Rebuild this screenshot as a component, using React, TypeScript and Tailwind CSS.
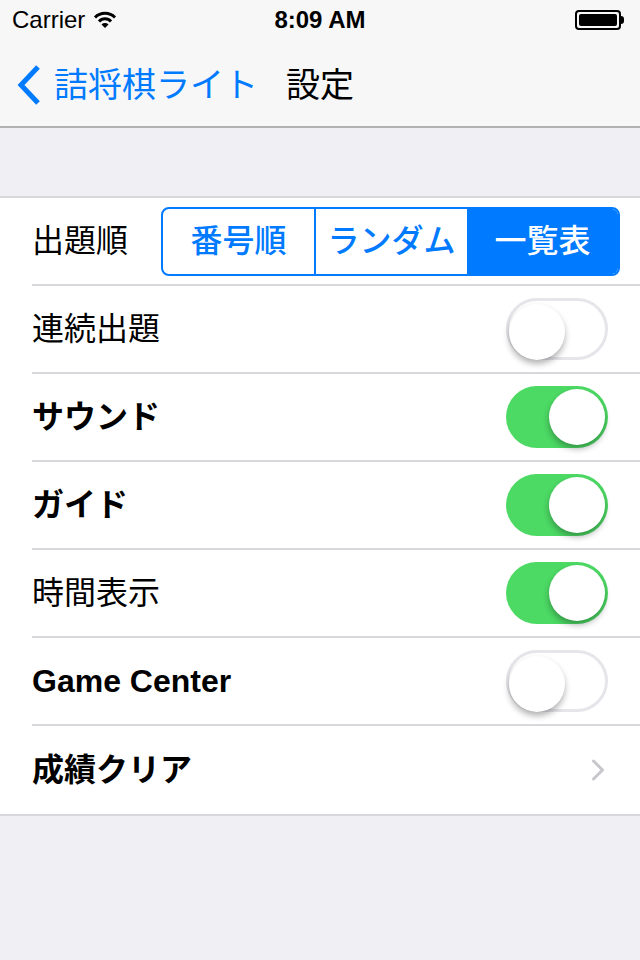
import { ChevronRight } from "lucide-react";

const jp = { fontFamily: '"Liberation Sans", "Noto Sans CJK JP", sans-serif' };

function Toggle({ on }: { on: boolean }) {
  return (
    <div
      className={`relative w-[102px] h-[62px] rounded-full ${
        on ? "bg-[#4cd964]" : "bg-white border-[3px] border-[#e5e5ea]"
      }`}
    >
      <div
        className={`absolute top-[3px] w-[56px] h-[56px] rounded-full bg-white shadow-[0_4px_6px_rgba(0,0,0,0.3)] ${
          on ? "right-[3px]" : "left-0 -top-[0px]"
        }`}
      />
    </div>
  );
}

function Row({ label, bold, children, last, pr = "pr-8" }: { label: string; bold?: boolean; children: React.ReactNode; last?: boolean; pr?: string }) {
  return (
    <div className="pl-8">
      <div className={`h-[88px] flex items-center justify-between ${pr} ${last ? "" : "border-b-2 border-[#d8d8dc]"}`}>
        <span className={`text-[32px] text-black ${bold ? "font-semibold" : ""}`} style={jp}>
          {label}
        </span>
        {children}
      </div>
    </div>
  );
}

export default function App() {
  return (
    <div className="w-[640px] h-[960px] bg-[#efeff4]" style={jp}>
      {/* status + nav */}
      <div className="bg-[#f7f7f8] border-b-2 border-[#b2b2b2]">
        <div className="h-[40px] flex items-center px-3 relative">
          <span className="text-[24px] text-black" style={{ fontFamily: '"Liberation Sans", sans-serif' }}>Carrier</span>
          <svg width="24" height="18" viewBox="0 0 24 18" className="ml-2">
            <path d="M2 6.5 A14 14 0 0 1 22 6.5" stroke="black" strokeWidth="3" fill="none" />
            <path d="M6 10.5 A8 8 0 0 1 18 10.5" stroke="black" strokeWidth="3" fill="none" />
            <path d="M12 17 L8.5 13.5 A5 5 0 0 1 15.5 13.5 Z" fill="black" />
          </svg>
          <span className="absolute left-0 right-0 text-center text-[24px] font-bold text-black pointer-events-none" style={{ fontFamily: '"Liberation Sans", sans-serif' }}>
            8:09 AM
          </span>
          <div className="ml-auto flex items-center mr-1">
            <div className="w-[46px] h-[20px] rounded-[4px] border-2 border-black p-[2px]">
              <div className="w-full h-full bg-black rounded-[2px]" />
            </div>
            <div className="w-[3px] h-[8px] bg-black rounded-r-sm" />
          </div>
        </div>
        <div className="h-[86px] flex items-center pl-4 pt-1">
          <svg width="26" height="42" viewBox="0 0 26 42">
            <path d="M22 3 L5 21 L22 39" stroke="#007aff" strokeWidth="5" fill="none" />
          </svg>
          <span className="ml-3 text-[34px] text-[#007aff]">詰将棋ライト</span>
          <span className="ml-7 text-[34px] text-black">設定</span>
        </div>
      </div>

      <div className="h-[68px]" />

      <div className="bg-white border-y-2 border-[#d8d8dc]">
        <Row label="出題順" pr="pr-5">
          <div className="flex w-[459px] h-[69px] border-2 border-[#007aff] rounded-[8px] overflow-hidden text-[32px] font-medium text-[#007aff]">
            <div className="flex-1 flex items-center justify-center border-r-2 border-[#007aff]">番号順</div>
            <div className="flex-1 flex items-center justify-center">ランダム</div>
            <div className="flex-1 flex items-center justify-center bg-[#007aff] text-white">一覧表</div>
          </div>
        </Row>
        <Row label="連続出題"><Toggle on={false} /></Row>
        <Row label="サウンド" bold><Toggle on /></Row>
        <Row label="ガイド" bold><Toggle on /></Row>
        <Row label="時間表示"><Toggle on /></Row>
        <Row label="Game Center" bold><Toggle on={false} /></Row>
        <Row label="成績クリア" bold last>
          <ChevronRight size={36} strokeWidth={2} color="#c7c7cc" className="-mr-2" />
        </Row>
      </div>
    </div>
  );
}
